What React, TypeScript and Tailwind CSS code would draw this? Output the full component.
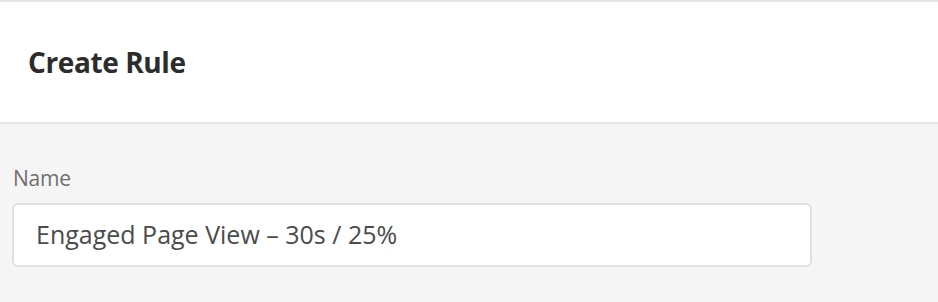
import React from 'react';

const App: React.FC = () => {
  return (
    <div className="w-[938px] h-[302px] bg-[#f5f5f5] flex flex-col" style={{ fontFamily: '"Open Sans", "Noto Sans", sans-serif' }}>
      {/* Header */}
      <div className="h-[124px] bg-white border-t-2 border-b-2 border-[#e6e6e6] flex items-center px-[28px]">
        <h1 className="text-[28px] leading-[36px] font-bold text-[#2c2c2c] tracking-[-0.4px]">Create Rule</h1>
      </div>

      {/* Form */}
      <div className="pl-[12px] pt-[40px]">
        <label className="block text-[21px] text-[#6e6e6e] leading-[28px] pl-[1px] tracking-[-0.2px]">Name</label>
        <div className="mt-[11px] w-[800px] h-[64px] bg-white border-2 border-[#e1e1e1] rounded-[6px] flex items-center px-[22px]">
          <span className="text-[25px] text-[#4b4b4b]">Engaged Page View – 30s / 25%</span>
        </div>
      </div>
    </div>
  );
};

export default App;
